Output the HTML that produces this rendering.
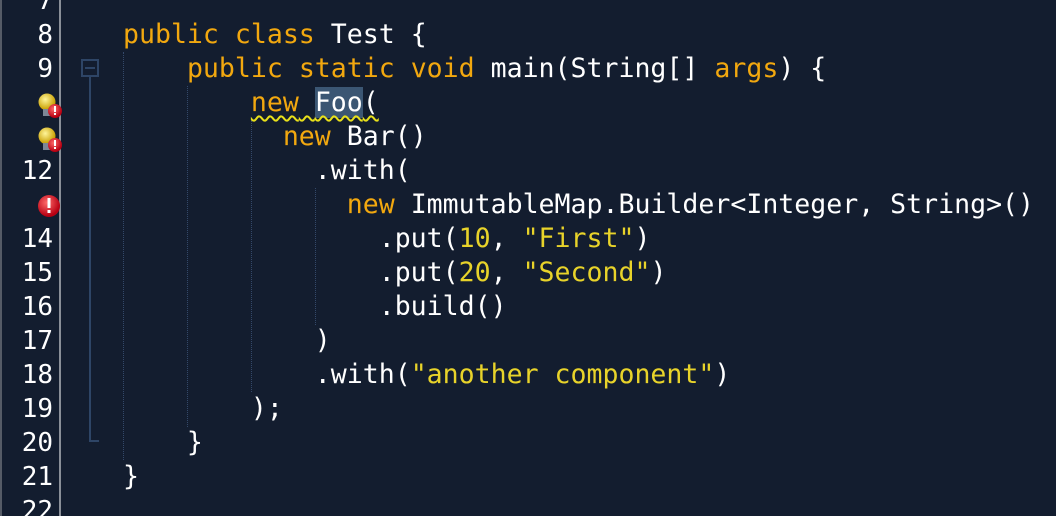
<!DOCTYPE html>
<html style="width:1056px;height:516px;overflow:hidden"><head><style>
*{margin:0;padding:0}
body{width:1056px;height:516px;overflow:hidden;background:#131d2f;position:relative;font-family:"DejaVu Sans Mono","Liberation Mono",monospace}
.edge{position:absolute;left:0;top:0;width:2px;height:516px;background:#555b66}
.sep{position:absolute;left:59px;top:0;width:2px;height:516px;background:#8a8f98}
.num{position:absolute;left:0;width:53px;text-align:right;font-size:26px;color:#fff;line-height:34px}
.code{position:absolute;left:123px;font-size:26.55px;color:#fff;line-height:34px;white-space:pre}
.k{color:#f2a80f}.s{color:#e8d32a}
.g{position:absolute;width:0;border-left:1px dotted #34496a}
.sel{background:#3b5673}
.wav{text-decoration:underline wavy #e8e01a;text-underline-offset:4px;text-decoration-thickness:1.5px}
</style></head><body>
<div class="edge"></div><div class="sep"></div>
<div class="num" style="top:-16px">7</div>
<div class="num" style="top:18px">8</div>
<div class="num" style="top:52px">9</div>
<div class="num" style="top:154px">12</div>
<div class="num" style="top:222px">14</div>
<div class="num" style="top:256px">15</div>
<div class="num" style="top:290px">16</div>
<div class="num" style="top:324px">17</div>
<div class="num" style="top:358px">18</div>
<div class="num" style="top:392px">19</div>
<div class="num" style="top:426px">20</div>
<div class="num" style="top:460px">21</div>
<div class="num" style="top:494px">22</div>
<svg style="position:absolute;left:0;top:0" width="120" height="516">
<defs><radialGradient id="b" cx="0.4" cy="0.35" r="0.6"><stop offset="0" stop-color="#fff59a"/><stop offset="1" stop-color="#c9a000"/></radialGradient>
<radialGradient id="r" cx="0.4" cy="0.35" r="0.6"><stop offset="0" stop-color="#ff6a6a"/><stop offset="1" stop-color="#b80012"/></radialGradient></defs>
<g>
<circle cx="47" cy="102" r="8.5" fill="url(#b)"/><rect x="43" y="109" width="8" height="7" fill="#7d8796"/>
<circle cx="55" cy="111" r="7" fill="url(#r)"/><rect x="54" y="106" width="2" height="6" fill="#fff"/><rect x="54" y="113" width="2" height="2" fill="#fff"/>
</g>
<g transform="translate(0,34)">
<circle cx="47" cy="102" r="8.5" fill="url(#b)"/><rect x="43" y="109" width="8" height="7" fill="#7d8796"/>
<circle cx="55" cy="111" r="7" fill="url(#r)"/><rect x="54" y="106" width="2" height="6" fill="#fff"/><rect x="54" y="113" width="2" height="2" fill="#fff"/>
</g>
<circle cx="49" cy="206" r="11" fill="url(#r)"/><rect x="47.5" y="198" width="3" height="10" fill="#fff"/><rect x="47.5" y="210" width="3" height="3" fill="#fff"/>
<rect x="82" y="60" width="16" height="16" fill="none" stroke="#2e4566" stroke-width="2"/>
<line x1="85" y1="68" x2="95" y2="68" stroke="#2e4566" stroke-width="2"/>
<path d="M90 76 V441 H99" fill="none" stroke="#2e4566" stroke-width="2"/>
</svg>
<div class="g" style="left:123px;top:52px;height:408px"></div>
<div class="g" style="left:187px;top:86px;height:341px"></div>
<div class="g" style="left:251px;top:120px;height:272px"></div>
<div class="g" style="left:315px;top:188px;height:137px"></div>
<div class="code" style="top:18px"><span class="k">public class</span> Test {
    <span class="k">public static void</span> main(String[] <span class="k">args</span>) {
        <span class="wav"><span class="k">new</span> <span class="sel">Foo</span>(</span>
          <span class="k">new</span> Bar()
            .with(
              <span class="k">new</span> ImmutableMap.Builder&lt;Integer, String&gt;()
                .put(<span class="s">10</span>, <span class="s">"First"</span>)
                .put(<span class="s">20</span>, <span class="s">"Second"</span>)
                .build()
            )
            .with(<span class="s">"another component"</span>)
        );
    }
}</div>
</body></html>
